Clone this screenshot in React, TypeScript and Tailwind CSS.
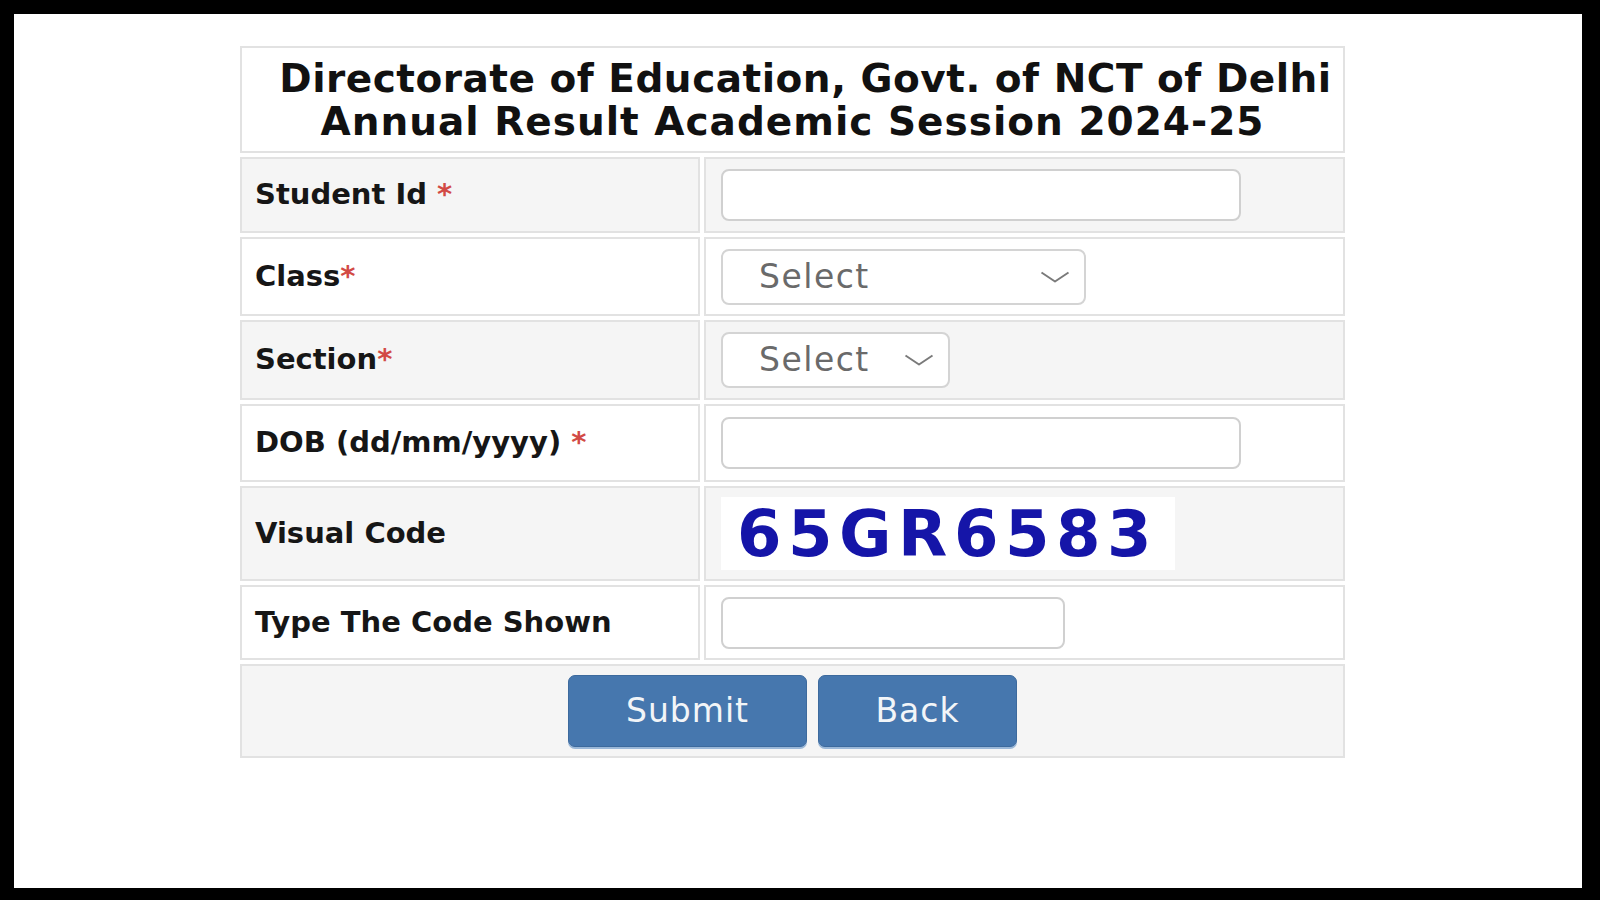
import React from "react";

const label = "font-['DejaVu_Sans',sans-serif] font-bold text-[29px] text-[#161616]";
const cell = "border-2 border-[#e2e2e2] flex items-center";

function Req() {
  return <span className="text-[#d24a45]">*</span>;
}

function Chevron() {
  return (
    <svg width="30" height="12" viewBox="0 0 30 12" fill="none" className="shrink-0">
      <path d="M1.5 1.5 L15 10.5 L28.5 1.5" stroke="#7a7a7a" strokeWidth="2" strokeLinejoin="round" />
    </svg>
  );
}

function TextBox({ w }: { w: string }) {
  return <input type="text" className={`${w} h-[52px] rounded-[8px] border-2 border-[#d0d0d0] bg-white outline-none`} />;
}

function SelectBox({ w }: { w: string }) {
  return (
    <div className={`${w} h-[56px] rounded-[8px] border-2 border-[#d4d4d4] bg-white flex items-center justify-between pl-[36px] pr-[14px]`}>
      <span className="font-['DejaVu_Sans',sans-serif] text-[33px] tracking-[1.5px] text-[#6a6a6a]">Select</span>
      <Chevron />
    </div>
  );
}

function Row({ bg, h, left, right }: { bg: string; h: string; left: React.ReactNode; right: React.ReactNode }) {
  return (
    <div className={`grid grid-cols-[460px_1fr] gap-[4px] ${h}`}>
      <div className={`${cell} ${bg} pl-[13px]`}>
        <span className={label}>{left}</span>
      </div>
      <div className={`${cell} ${bg} pl-[15px]`}>{right}</div>
    </div>
  );
}

export default function App() {
  return (
    <div className="h-screen bg-black pt-[14px] pl-[14px] pr-[18px] pb-[12px]">
      <div className="h-full bg-white pt-[32px]">
        <div className="ml-[226px] w-[1105px] flex flex-col gap-[4px]">
          <div className="border-2 border-[#e2e2e2] bg-white h-[107px] flex flex-col items-center justify-center font-['DejaVu_Sans',sans-serif] font-bold text-[39px] tracking-[0.5px] leading-[43px] text-[#111]">
            <div className="pl-[26px] whitespace-nowrap">Directorate of Education, Govt. of NCT of Delhi</div>
            <div className="tracking-[1px] whitespace-nowrap">Annual Result Academic Session 2024-25</div>
          </div>

          <Row bg="bg-[#f5f5f5]" h="h-[76px]" left={<>Student Id <Req /></>} right={<TextBox w="w-[520px]" />} />
          <Row bg="bg-white" h="h-[79px]" left={<>Class<Req /></>} right={<SelectBox w="w-[365px]" />} />
          <Row bg="bg-[#f5f5f5]" h="h-[80px]" left={<>Section<Req /></>} right={<SelectBox w="w-[229px]" />} />
          <Row bg="bg-white" h="h-[78px]" left={<>DOB (dd/mm/yyyy) <Req /></>} right={<TextBox w="w-[520px]" />} />
          <Row
            bg="bg-[#f5f5f5]"
            h="h-[95px]"
            left="Visual Code"
            right={
              <div className="w-[454px] h-[73px] bg-white flex items-center pl-[16px]">
                <span className="font-['DejaVu_Sans',sans-serif] font-bold text-[64px] tracking-[6.5px] leading-none text-[#1515a8]">65GR6583</span>
              </div>
            }
          />
          <Row bg="bg-white" h="h-[75px]" left="Type The Code Shown" right={<TextBox w="w-[344px]" />} />

          <div className="border-2 border-[#e2e2e2] bg-[#f5f5f5] h-[94px] flex items-center justify-center gap-[11px]">
            <button className="w-[239px] h-[72px] rounded-[7px] bg-[#4677ae] border border-[#3d6a9d] shadow-[0_2px_0_#9bb8d8] font-['DejaVu_Sans',sans-serif] text-[33px] tracking-[1px] text-[#f2f5f8]">
              Submit
            </button>
            <button className="w-[199px] h-[72px] rounded-[7px] bg-[#4677ae] border border-[#3d6a9d] shadow-[0_2px_0_#9bb8d8] font-['DejaVu_Sans',sans-serif] text-[33px] tracking-[1px] text-[#f2f5f8]">
              Back
            </button>
          </div>
        </div>
      </div>
    </div>
  );
}
